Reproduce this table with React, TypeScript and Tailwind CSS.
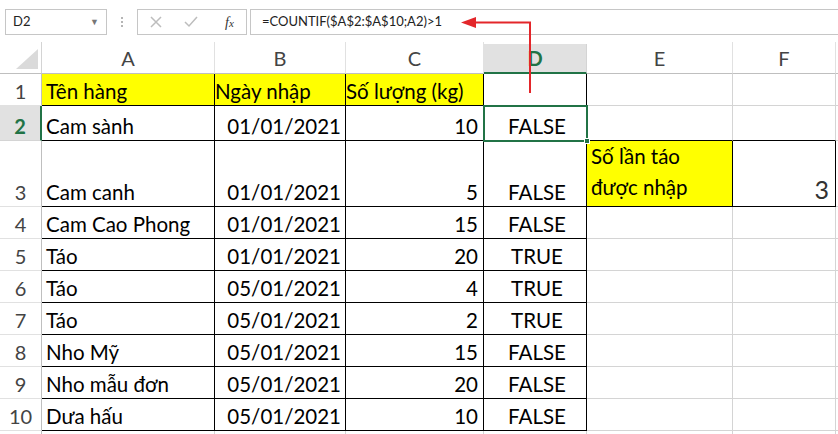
import React from 'react';

type Cell = { t?: string; align?: 'l' | 'r' | 'c'; yellow?: boolean; black?: boolean; bottomBlack?: boolean };

function mk(a: string, b: string, c: string, d: string): Cell[] {
  return [
    { t: a, align: 'l', black: true },
    { t: b, align: 'r', black: true },
    { t: c, align: 'r', black: true },
    { t: d, align: 'c', black: true },
  ];
}

const rows: Cell[][] = [
  [
    { t: 'Tên hàng', align: 'l', yellow: true, black: true },
    { t: 'Ngày nhập', align: 'l', yellow: true, black: true },
    { t: 'Số lượng (kg)', align: 'l', yellow: true, black: true },
    { t: '', black: true },
    {},
    {},
    {},
  ],
  [...mk('Cam sành', '01/01/2021', '10', 'FALSE'), { bottomBlack: true }, { bottomBlack: true }, {}],
  [...mk('Cam canh', '01/01/2021', '5', 'FALSE'), { t: 'E3', yellow: true, black: true }, { t: 'F3', black: true }, {}],
  [...mk('Cam Cao Phong', '01/01/2021', '15', 'FALSE'), {}, {}, {}],
  [...mk('Táo', '01/01/2021', '20', 'TRUE'), {}, {}, {}],
  [...mk('Táo', '05/01/2021', '4', 'TRUE'), {}, {}, {}],
  [...mk('Táo', '05/01/2021', '2', 'TRUE'), {}, {}, {}],
  [...mk('Nho Mỹ', '05/01/2021', '15', 'FALSE'), {}, {}, {}],
  [...mk('Nho mẫu đơn', '05/01/2021', '20', 'FALSE'), {}, {}, {}],
  [...mk('Dưa hấu', '05/01/2021', '10', 'FALSE'), {}, {}, {}],
  [{}, {}, {}, {}, {}, {}, {}],
];

function GridCell({ cell, r, c }: { cell: Cell; r: number; c: number }) {
  const right = cell.black ? 'border-r-black' : 'border-r-[#d4d4d4]';
  const bottom = cell.black || cell.bottomBlack ? 'border-b-black' : 'border-b-[#d4d4d4]';
  const bg = cell.yellow ? 'bg-[#ffff00]' : 'bg-white';

  if (cell.t === 'E3') {
    return (
      <div className={`border-r border-b ${right} ${bottom} ${bg} flex flex-col justify-end pl-[4px] pb-[3px] leading-[31px] overflow-hidden`}>
        <span>Số lần táo</span>
        <span>được nhập</span>
      </div>
    );
  }
  if (cell.t === 'F3') {
    return (
      <div className={`border-r border-b ${right} ${bottom} ${bg} flex items-end justify-end pr-[6px] pb-[3px] text-[25px] leading-[28px] text-[#333]`}>
        3
      </div>
    );
  }

  const just = cell.align === 'r' ? 'justify-end' : cell.align === 'c' ? 'justify-center' : 'justify-start';
  const pad = c === 1 ? 'pr-[4px]' : c === 2 ? 'pr-[5px]' : 'pl-[4px]';

  return (
    <div
      className={`relative border-r border-b ${right} ${bottom} ${bg} flex items-end ${just} ${pad} pb-[2px] leading-[24px] whitespace-nowrap`}
    >
      {cell.t}
      {r === 1 && c === 3 && (
        <div className="absolute -left-px -top-px w-[105px] h-[37px] border-2 border-[#217346] z-10">
          <div className="absolute -right-[4px] -bottom-[4px] w-[6px] h-[6px] bg-[#217346] border border-white" />
        </div>
      )}
    </div>
  );
}

export default function App() {
  const cols = ['A', 'B', 'C', 'D', 'E', 'F', ''];

  return (
    <div className="relative w-[838px] h-[434px] overflow-hidden bg-white text-[20.5px] text-black" style={{ fontFamily: 'Lato, sans-serif' }}>
      {/* formula bar */}
      <div className="h-[42px] flex items-start pt-[9px] text-[13px]">
        <div className="ml-[5px] w-[102px] h-[26px] border border-[#c6c6c6] flex items-center justify-between pl-[7px] pr-[7px] text-[#222]">
          <span>D2</span>
          <span className="text-[9px] text-[#777]">▼</span>
        </div>
        <div className="w-[30px] h-[26px] flex flex-col items-center justify-center gap-[2px]">
          <span className="w-[2px] h-[2px] bg-[#b5b5b5]" />
          <span className="w-[2px] h-[2px] bg-[#b5b5b5]" />
          <span className="w-[2px] h-[2px] bg-[#b5b5b5]" />
        </div>
        <div className="w-[110px] h-[26px] border border-[#c6c6c6] flex items-center">
          <svg width="14" height="14" viewBox="0 0 14 14" className="ml-[11px]">
            <path d="M2 2 L12 12 M12 2 L2 12" stroke="#bdbdbd" strokeWidth="1.5" />
          </svg>
          <svg width="16" height="14" viewBox="0 0 16 14" className="ml-[20px]">
            <path d="M2 7 L6 11 L14 2" stroke="#bdbdbd" strokeWidth="1.5" fill="none" />
          </svg>
          <span className="ml-[26px] text-[14px] italic text-[#333]" style={{ fontFamily: '"Liberation Serif", serif' }}>
            f<span className="text-[11px]">x</span>
          </span>
        </div>
        <div className="ml-[3px] flex-1 h-[26px] border-y border-l border-[#c6c6c6] flex items-center pl-[11px] text-[#222]">
          =COUNTIF($A$2:$A$10;A2)&gt;1
        </div>
      </div>

      {/* sheet */}
      <div className="grid grid-cols-[42px_173px_131px_138px_103px_146px_103px_1fr] grid-rows-[32px_32px_35px_66px_32px_32px_32px_32px_32px_32px_32px_32px]">
        {/* corner */}
        <div className="border-r border-b border-r-[#d4d4d4] border-b-[#bfbfbf] flex items-end justify-end pr-[3px] pb-[4px]">
          <svg width="22" height="20" viewBox="0 0 22 20">
            <polygon points="22,0 22,20 0,20" fill="#dadada" />
          </svg>
        </div>
        {cols.map((c, i) => (
          <div
            key={i}
            className={`flex items-center justify-center leading-[24px] text-[20px] ${
              c === 'D'
                ? 'mt-[2px] bg-[#e1e1e1] border-b-2 border-b-[#217346] border-r border-r-[#d4d4d4] font-bold text-[#217346]'
                : 'border-r border-b border-r-[#e1e1e1] border-b-[#bfbfbf] text-[#444]'
            }`}
          >
            {c}
          </div>
        ))}

        {rows.map((row, r) => (
          <React.Fragment key={r}>
            <div
              className={`flex items-end justify-center pb-[2px] leading-[24px] text-[20px] ${
                r === 1
                  ? 'bg-[#e1e1e1] border-r-2 border-r-[#217346] border-b border-b-[#d4d4d4] font-bold text-[#217346]'
                  : 'border-r border-b border-r-[#bfbfbf] border-b-[#e1e1e1] text-[#444]'
              }`}
            >
              {r < 10 ? r + 1 : ''}
            </div>
            {row.map((cell, c) => (
              <GridCell key={c} cell={cell} r={r} c={c} />
            ))}
          </React.Fragment>
        ))}
      </div>

      {/* red annotation arrow */}
      <svg className="absolute left-0 top-0 pointer-events-none z-20" width="838" height="434">
        <path d="M530 93 L530 22.5 L474 22.5" stroke="#e3262a" strokeWidth="2" fill="none" />
        <polygon points="461,22.5 476,17 476,28" fill="#e3262a" />
      </svg>
    </div>
  );
}
